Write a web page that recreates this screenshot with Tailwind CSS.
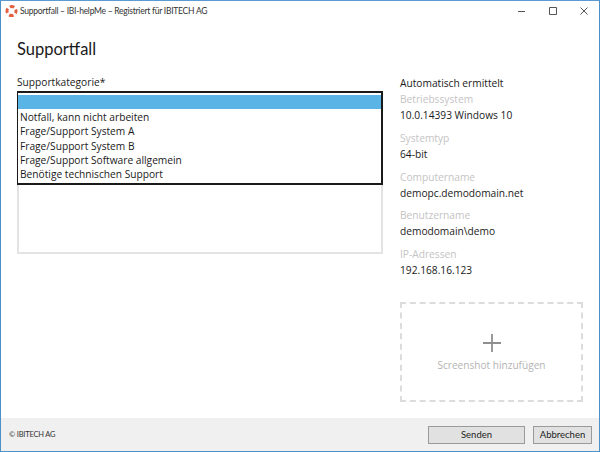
<!DOCTYPE html>
<html lang="de">
<head>
    <meta charset="UTF-8">
    <title>Supportfall</title>
    <script src="https://cdn.jsdelivr.net/npm/@tailwindcss/browser@4"></script>
</head>
<body class="bg-white">
    <div class="w-[600px] h-[452px] flex flex-col border border-[#4a90c9] border-t-[#5c9bd1] bg-white text-[#1a1a1a] font-['Open_Sans','Noto_Sans',sans-serif] overflow-hidden">
        <!-- title bar -->
        <div class="h-[20px] flex items-center shrink-0 pl-[4px]">
            <svg width="14" height="14" viewBox="0 0 14 14" class="shrink-0">
                <circle cx="6.500" cy="7" r="4.500" fill="none" stroke="#e2603f" stroke-width="3" stroke-dasharray="4.500 2.570" stroke-dashoffset="2.250"/>
            </svg>
            <span class="ml-[1px] font-['Lato',sans-serif] text-[8.500px] tracking-[-0.25px] leading-none text-[#333]">Supportfall – IBI-helpMe – Registriert für IBITECH AG</span>
            <div class="ml-auto flex items-center gap-[21px] pr-[10px] text-[#444]">
                <svg width="10" height="10" viewBox="0 0 10 10"><path d="M1 5.500h7" stroke="#555" fill="none"/></svg>
                <svg width="10" height="10" viewBox="0 0 10 10"><path d="M1.500 1.500h7v7h-7z" stroke="#555" fill="none"/></svg>
                <svg width="10" height="10" viewBox="0 0 10 10"><path d="M1.500 1.500l7 7M8.500 1.500l-7 7" stroke="#555" fill="none"/></svg>
            </div>
        </div>

        <!-- content -->
        <div class="flex-1 flex pl-[16px] pr-[17px] min-h-0">
            <div class="w-[366px] shrink-0">
                <h1 class="mt-[16px] font-['Lato',sans-serif] text-[16.500px] leading-[24px] text-[#1a1a1a]">Supportfall</h1>
                <div class="mt-[14px] text-[10.200px] leading-[15px]">Supportkategorie*</div>
                <div class="relative mt-[1px] h-[163px] border-2 border-[#e3e3e3] bg-white">
                    <ul class="absolute -left-[2px] -top-[2px] w-[366px] h-[94px] border border-[#1a1a1a] border-t-2 border-r-2 border-b-2 bg-white text-[10.200px] leading-[14.300px] pt-[2px]">
                        <li class="h-[14px] mb-[1px] bg-[#5ab4e5]"></li>
                        <li class="pl-[2px]">Notfall, kann nicht arbeiten</li>
                        <li class="pl-[2px]">Frage/Support System A</li>
                        <li class="pl-[2px]">Frage/Support System B</li>
                        <li class="pl-[2px]">Frage/Support Software allgemein</li>
                        <li class="pl-[2px]">Benötige technischen Support</li>
                    </ul>
                </div>
            </div>

            <div class="ml-[17px] flex-1 flex flex-col">
                <div class="mt-[55px] text-[10.200px] leading-[15px]">Automatisch ermittelt</div>
                <dl class="text-[10.200px] leading-[16px]">
                    <dt class="text-[#c4c4c4]">Betriebssystem</dt>
                    <dd class="text-[#1a1a1a]">10.0.14393 Windows 10</dd>
                    <dt class="mt-[6.750px] text-[#c4c4c4]">Systemtyp</dt>
                    <dd>64-bit</dd>
                    <dt class="mt-[6.750px] text-[#c4c4c4]">Computername</dt>
                    <dd>demopc.demodomain.net</dd>
                    <dt class="mt-[6.750px] text-[#c4c4c4]">Benutzername</dt>
                    <dd>demodomain\demo</dd>
                    <dt class="mt-[6.750px] text-[#c4c4c4]">IP-Adressen</dt>
                    <dd>192.168.16.123</dd>
                </dl>
                <div class="mt-[24px] w-[183px] h-[100px] border-2 border-dashed border-[#dcdcdc] flex flex-col items-center pt-[30px]">
                    <svg width="18" height="18" viewBox="0 0 18 18"><path d="M0 9h18M9 0v18" stroke="#8f8f8f" stroke-width="1.800" fill="none"/></svg>
                    <span class="mt-[6px] text-[10.100px] leading-[15px] text-[#b4b4b4]">Screenshot hinzufügen</span>
                </div>
            </div>
        </div>

        <!-- footer -->
        <div class="h-[33px] shrink-0 bg-[#f0f0f0] flex items-center pl-[8px] pr-[7px]">
            <span class="font-['Lato',sans-serif] text-[7.500px] tracking-[-0.2px] text-[#333]">© IBITECH AG</span>
            <button class="ml-auto w-[97px] h-[18px] border border-[#9a9a9a] bg-[#e1e1e1] font-['Lato',sans-serif] text-[9.500px] leading-none text-[#222]">Senden</button>
            <button class="ml-[8px] w-[59px] h-[18px] border border-[#9a9a9a] bg-[#e1e1e1] font-['Lato',sans-serif] text-[9.500px] leading-none text-[#222]">Abbrechen</button>
        </div>
    </div>
</body>
</html>
